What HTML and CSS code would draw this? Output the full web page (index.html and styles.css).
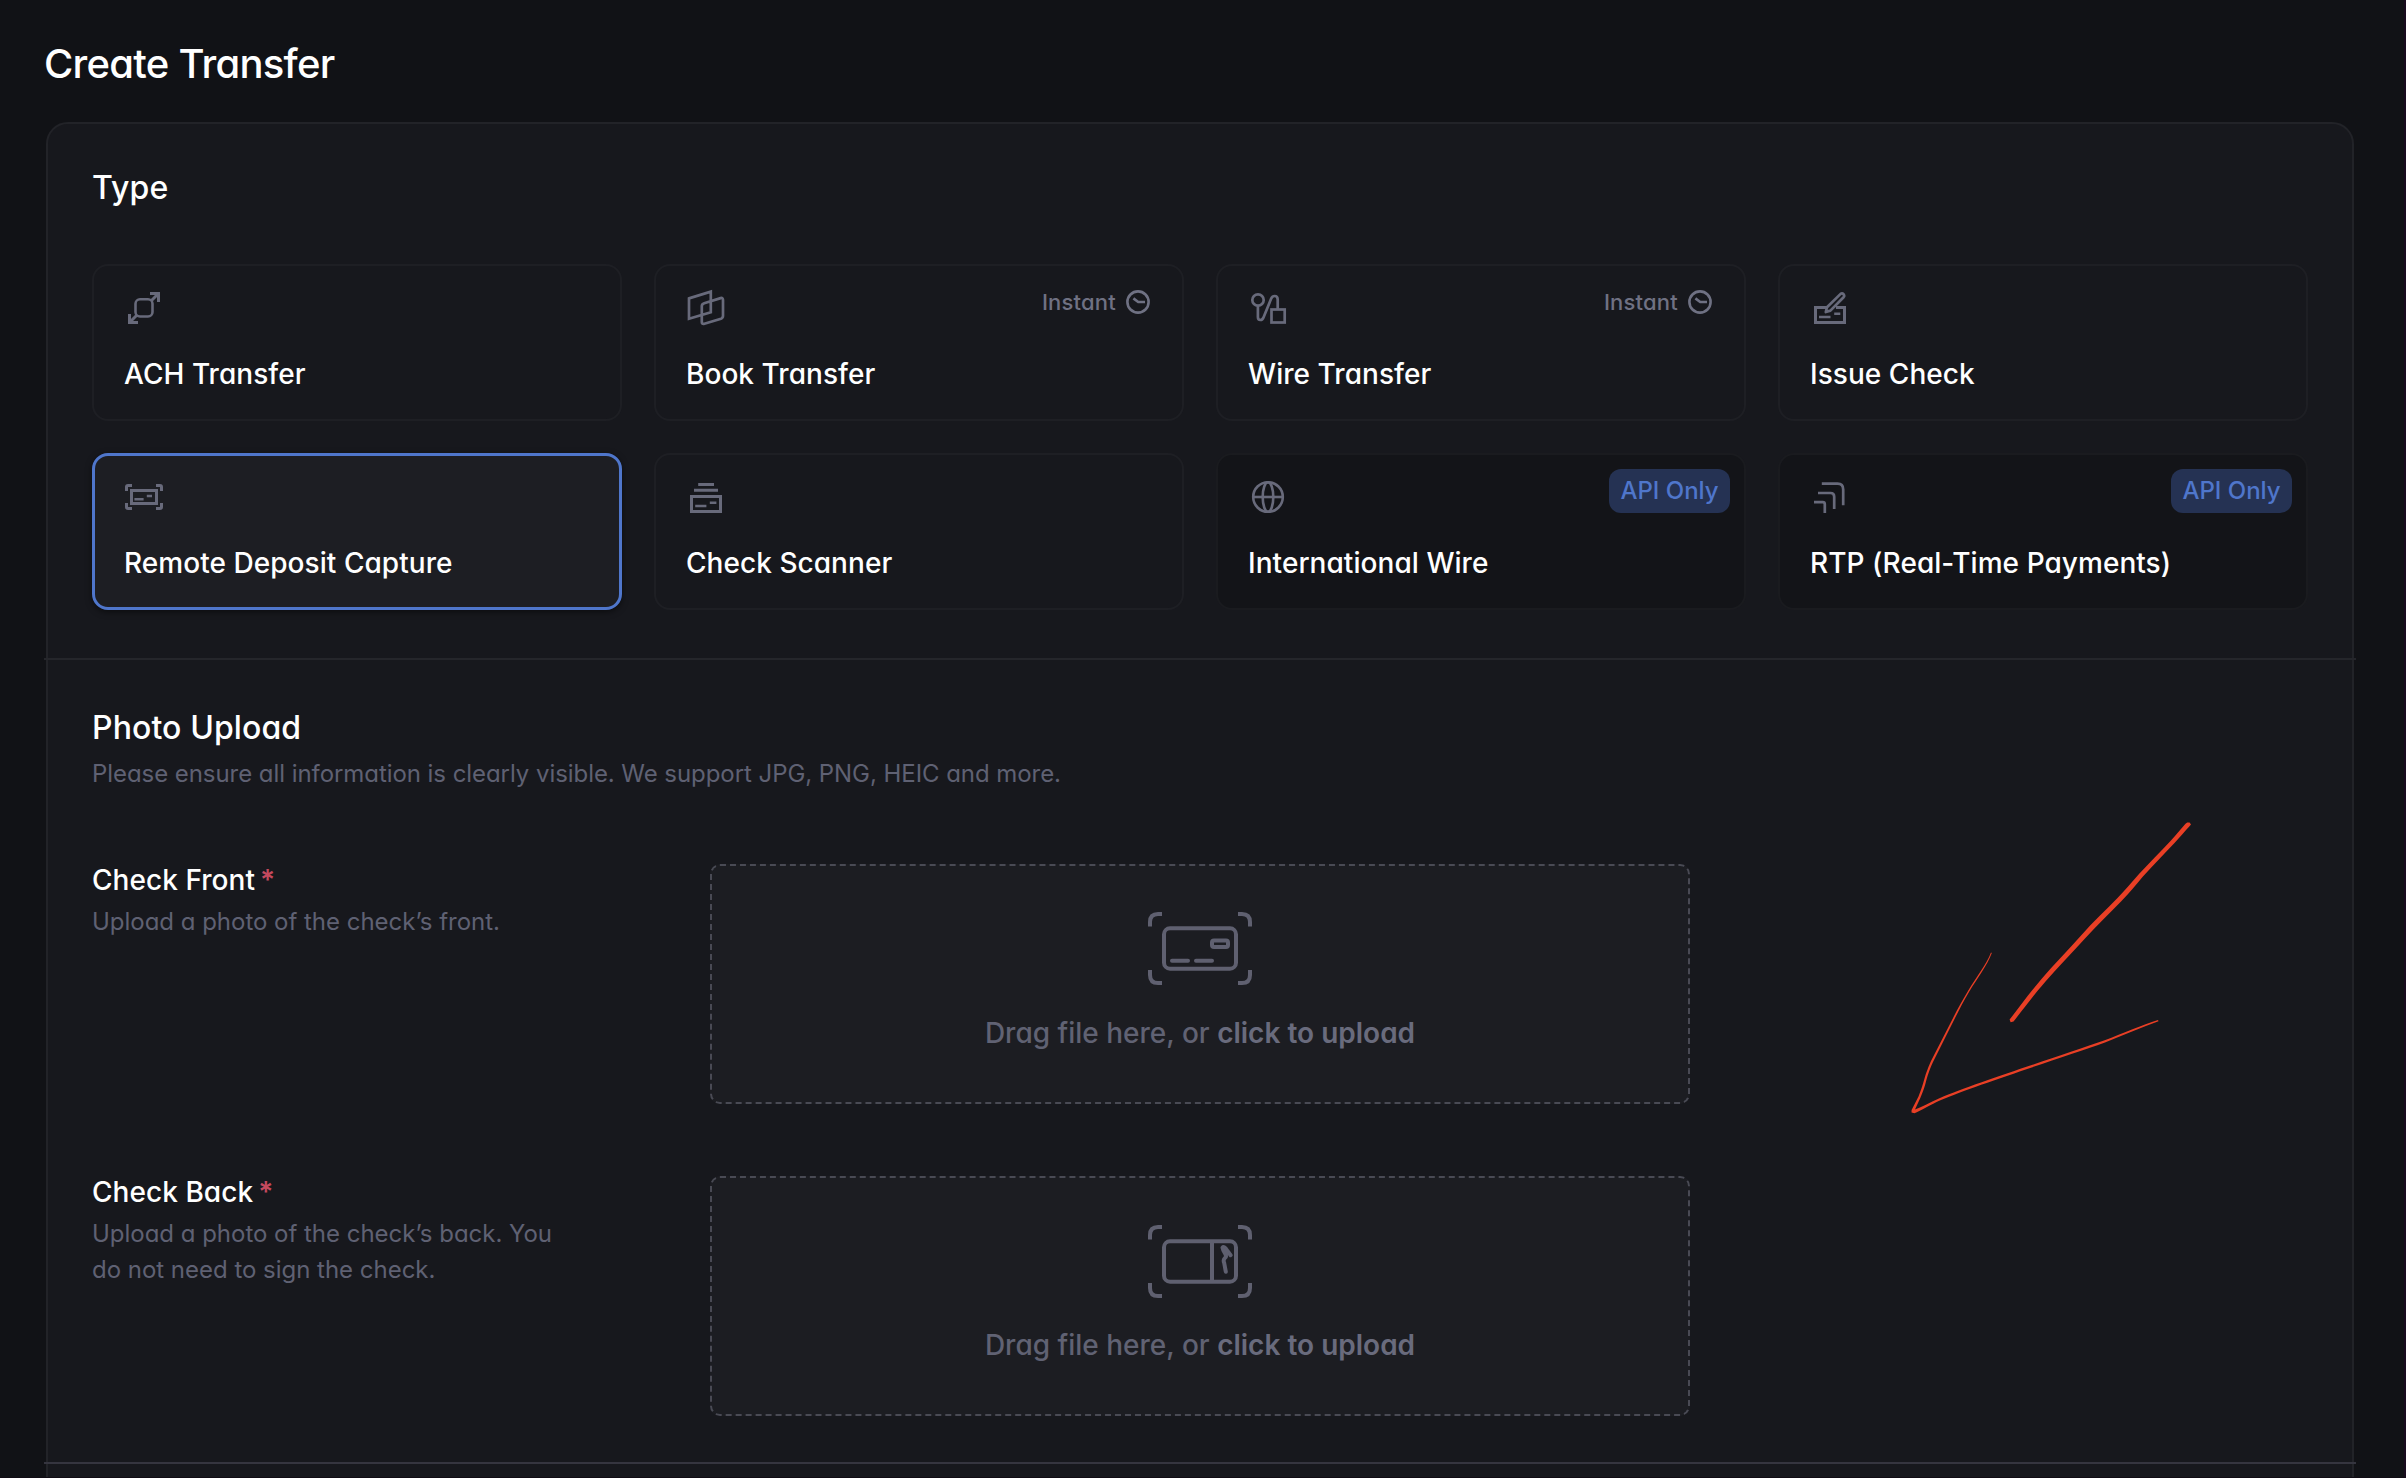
FILE: index.html
```html
<!DOCTYPE html>
<html lang="en">
<head>
<meta charset="utf-8">
<title>Create Transfer</title>
<link rel="stylesheet" href="styles.css">
</head>
<body>
<main class="page">
  <h1 class="page-title">Create Transfer</h1>
  <div class="panel">
    <section class="section section-type">
      <h2 class="heading">Type</h2>
      <div class="types">
        <div class="card">
          <svg class="icon" viewBox="0 0 40 40"><rect x="11.5" y="11.3" width="17" height="17.2" rx="4.5" stroke-width="2.6"/><path d="M26 5.5H34.5V14M34.5 5.5L27 13M5.5 26V34.5H14M5.5 34.5L13 27"/></svg>
          <span class="card-name">ACH Transfer</span>
        </div>
        <div class="card">
          <svg class="icon" viewBox="0 0 40 40"><path stroke-width="2.7" d="M3 10.4L24.8 3.7V24.2L3 30.7ZM18.2 15.2L34.6 10.1Q37 9.4 37 12V27.8Q37 30 35 30.7L18.4 35.8Q15.8 36.5 15.8 34V18Q15.8 16 18.2 15.2Z"/></svg>
          <span class="card-name">Book Transfer</span>
          <span class="instant">Instant <svg class="clock" viewBox="0 0 24 24"><circle cx="12" cy="12" r="10.6"/><path d="M7.4 8.4L12.2 12H19"/></svg></span>
        </div>
        <div class="card">
          <svg class="icon" viewBox="0 0 40 40"><g stroke-width="2.7"><circle cx="10" cy="12" r="5.7"/><path d="M9.9 18V29Q9.9 32 12.3 32Q14.6 32 15.7 29L23.2 10.6Q24.3 8 26.6 8Q29.7 8 29.7 11.5V21"/><rect x="23.5" y="21.5" width="13.2" height="13"/></g></svg>
          <span class="card-name">Wire Transfer</span>
          <span class="instant">Instant <svg class="clock" viewBox="0 0 24 24"><circle cx="12" cy="12" r="10.6"/><path d="M7.4 8.4L12.2 12H19"/></svg></span>
        </div>
        <div class="card">
          <svg class="icon" viewBox="0 0 40 40"><path d="M18 19.5H5.5V34.5H34.5V19.5H26"/><path stroke-width="2.7" stroke-linejoin="round" d="M15.8 24L17 19.2L30.6 5.9Q32.2 4.8 33.6 6.2Q34.8 7.8 33.6 9.2L20.4 22.6Z"/><path stroke-width="2.6" d="M9 29H20.5M24.2 25.7H30.3"/></svg>
          <span class="card-name">Issue Check</span>
        </div>
        <div class="card card-selected">
          <svg class="icon" viewBox="0 0 40 40"><path d="M2.5 14V10Q2.5 8.5 4 8.5H8M32 8.5H36Q37.5 8.5 37.5 10V14M37.5 26V30Q37.5 31.5 36 31.5H32M8 31.5H4Q2.5 31.5 2.5 30V26"/><rect x="7.5" y="13.5" width="25" height="13"/><path stroke-width="2.6" d="M10.4 22.2H19.6M22.8 19H28"/></svg>
          <span class="card-name">Remote Deposit Capture</span>
        </div>
        <div class="card">
          <svg class="icon" viewBox="0 0 40 40"><path d="M12.2 7.5H28M8 13.3H32"/><rect x="5.5" y="19.5" width="29" height="15"/><path stroke-width="2.6" d="M9.2 29H20.4M23.8 25.8H30.4"/></svg>
          <span class="card-name">Check Scanner</span>
        </div>
        <div class="card card-disabled">
          <svg class="icon" viewBox="0 0 40 40"><g stroke-width="2.6"><circle cx="20" cy="20" r="14.8"/><ellipse cx="20" cy="20" rx="5.3" ry="14.8"/><path d="M5 20H35"/></g></svg>
          <span class="card-name">International Wire</span>
          <span class="badge">API Only</span>
        </div>
        <div class="card card-disabled">
          <svg class="icon" viewBox="0 0 40 40"><path stroke-width="2.7" d="M11.8 6.7H27.5Q33.2 6.7 33.2 12.5V28.3M8 16H20.5Q24.2 16 24.2 19.7V32M4 25.2H12.8Q14.8 25.2 14.8 27.2V36"/></svg>
          <span class="card-name">RTP (Real-Time Payments)</span>
          <span class="badge">API Only</span>
        </div>
      </div>
    </section>
    <hr class="divider">
    <section class="section section-upload">
      <h2 class="heading">Photo Upload</h2>
      <p class="hint">Please ensure all information is clearly visible. We support JPG, PNG, HEIC and more.</p>
      <div class="fields">
        <div class="field">
          <div class="field-text">
            <h3 class="field-label">Check Front<span class="required">*</span></h3>
            <p class="hint">Upload a photo of the check’s front.</p>
          </div>
          <div class="dropzone">
            <svg class="scan" viewBox="0 0 104 73"><path d="M2 14.5V10Q2 2 10 2H14M90 2H94Q102 2 102 10V14.5M102 58V63Q102 71 94 71H90M14 71H10Q2 71 2 63V58"/><rect x="16" y="16.3" width="72" height="40.4" rx="6"/><rect x="64" y="28.4" width="16" height="6.6" rx="2"/><path stroke-linecap="round" d="M24 48.7H40M48 48.7H64"/></svg>
            <p class="drop-text">Drag file here, or <b>click to upload</b></p>
          </div>
        </div>
        <div class="field">
          <div class="field-text">
            <h3 class="field-label">Check Back<span class="required">*</span></h3>
            <p class="hint">Upload a photo of the check’s back. You do not need to sign the check.</p>
          </div>
          <div class="dropzone">
            <svg class="scan scan-back" viewBox="0 0 104 73"><path d="M2 14.5V10Q2 2 10 2H14M90 2H94Q102 2 102 10V14.5M102 58V63Q102 71 94 71H90M14 71H10Q2 71 2 63V58"/><rect x="16" y="16.3" width="72" height="40.4" rx="6"/><path d="M64 16V57"/><path stroke-linecap="round" stroke-linejoin="round" d="M82.6 30.2L79.5 26Q76 20.6 74.5 22.6Q75 25.5 77.3 29Q79 31.8 76.6 33.4Q75 35 76.2 38L77.8 46.7"/></svg>
            <p class="drop-text">Drag file here, or <b>click to upload</b></p>
          </div>
        </div>
      </div>
    </section>
    <hr class="divider divider-strong">
  </div>
  <svg class="annotation" viewBox="0 0 340 340">
    <path d="M307.2 22.4L309.6 22.6L311 24.6L309.5 26.2C305 31 300 37 294.500 43C283 55 273 65.500 262.500 77C255 86 249 93 241.500 101C230 113 217 125 205 138.500C192 153 178 167 165.500 181.500C152 197 145 207 133.500 221.500L130.600 222.200L129.600 219.600C139 207.500 148 195 161.500 179C174 164.500 188 150 201.500 135C213 121.500 226 110 237.500 98C245 90 251 83 259 74C270 62.500 280 52 290.500 41C296 35 301 29 305.500 23.800Z"/>
    <path d="M111.800 153C107 166 98 177 89 192C83 202 78 212 72 224L53 262C44.500 281 47.500 282 40.500 297.500L35 309.500C42 307 50 302.500 60 298C95 283 180 256 224 240.500C244 233 262 225 278 220L278.500 221.200C262 227 244 235 225 242.500C180 258.500 95 285.500 61 300C50 305 42 310 34.500 313.200L31.500 312.500L31.600 310L38.500 296.500C45 281 43 279 51 261L70.500 223C76.500 211 82 201 88 191C97 176 106 165 111 152.500Z"/>
  </svg>
</main>
</body>
</html>
```
FILE: styles.css
```css
* { box-sizing: border-box; }

body {
  margin: 0;
  background: #111216;
  color: #fff;
  font-family: Inter, "Liberation Sans", sans-serif;
  font-feature-settings: "cv11";
  -webkit-font-smoothing: antialiased;
}

h1, h2, h3, p { margin: 0; font-weight: 500; }

.page {
  position: relative;
  height: 1478px;
  overflow: hidden;
  padding: 40px 50px 0 46px;
  border-right: 2px solid #190b1e;
  border-bottom: 1px solid #100c14;
}

.page-title {
  font-size: 40px;
  line-height: 48px;
  letter-spacing: -0.75px;
  margin: 0 0 34px -2px;
}

.panel {
  height: 1500px;
  border: 2px solid #222328;
  border-radius: 22px;
  background: #17181d;
}

.section { padding: 44px 44px 48px; }
.section-upload { padding-top: 48px; padding-bottom: 46px; }

.heading {
  font-size: 32px;
  line-height: 40px;
  letter-spacing: 0.1px;
}

.types {
  display: grid;
  grid-template-columns: repeat(4, 1fr);
  grid-auto-rows: 157px;
  gap: 32px;
  margin-top: 56px;
}

.card {
  position: relative;
  display: flex;
  flex-direction: column;
  gap: 28px;
  padding: 22px 30px;
  border: 2px solid #1e1f24;
  border-radius: 16px;
}

.card-selected {
  border: 3px solid #4f76cb;
  padding: 21px 29px;
  background: #1d1e23;
  box-shadow: 0 2px 6px rgba(0, 0, 0, 0.5);
}

.card-disabled {
  background: #131418;
  border-color: #1a1b1f;
}

.card-name {
  font-size: 28px;
  line-height: 36px;
  font-weight: 500;
  letter-spacing: 0.05px;
}

.icon, .clock, .scan {
  display: block;
  flex: none;
  fill: none;
  stroke: #686a7b;
}

.icon { width: 40px; height: 40px; stroke-width: 3; }
.clock { width: 24px; height: 24px; stroke-width: 2.6; }

.instant {
  position: absolute;
  top: 22px;
  right: 32px;
  display: flex;
  align-items: center;
  gap: 10px;
  color: #6f7183;
  font-size: 22px;
  line-height: 28px;
  font-weight: 500;
  letter-spacing: 0.2px;
}
.instant .clock { stroke: #6f7183; }

.badge {
  position: absolute;
  top: 14px;
  right: 14px;
  width: 121px;
  height: 44px;
  border-radius: 12px;
  background: #253253;
  color: #4f76cb;
  font-size: 24px;
  line-height: 43px;
  text-align: center;
  font-weight: 500;
}

.divider {
  height: 2px;
  margin: 0 -4px;
  border: 0;
  background: #25262b;
}
.divider-strong { background: #35353f; }

.hint {
  color: #5f6173;
  font-size: 24px;
  line-height: 36px;
  font-weight: 400;
  letter-spacing: -0.06px;
}

.heading + .hint { margin-top: 8px; }

.fields {
  display: flex;
  flex-direction: column;
  gap: 70px;
  margin-top: 70px;
}

.field {
  display: grid;
  grid-template-columns: 480px 980px;
  column-gap: 138px;
}

.field .hint { letter-spacing: -0.02px; }

.field-label {
  display: flex;
  gap: 5px;
  font-size: 28px;
  line-height: 36px;
  letter-spacing: 0.05px;
  margin-bottom: 6px;
}

.required { color: #c4495e; font-weight: 600; }

.dropzone {
  display: flex;
  flex-direction: column;
  align-items: center;
  height: 240px;
  margin-top: 2px;
  padding-top: 46px;
  border: 2px dashed #494a54;
  border-radius: 10px;
  background: #1c1d22;
}

.scan { width: 104px; height: 73px; stroke: #5f6070; stroke-width: 4; }
.scan-back { margin: 1px 0 -1px; }

.drop-text {
  margin-top: 30px;
  color: #606273;
  font-size: 28px;
  line-height: 36px;
}
.drop-text b { font-weight: 600; color: #696b7d; }

.annotation {
  position: absolute;
  left: 1880px;
  top: 800px;
  width: 340px;
  height: 340px;
  fill: #e93f25;
}
```
